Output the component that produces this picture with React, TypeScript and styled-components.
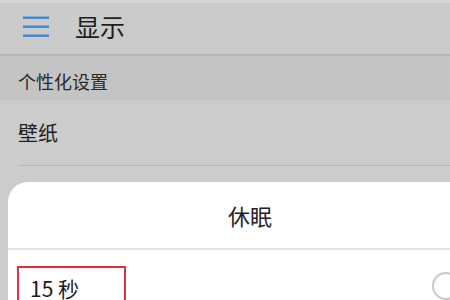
import React from "react";
import styled, { createGlobalStyle } from "styled-components";

const Global = createGlobalStyle`
  html, body { margin: 0; padding: 0; }
  body { width: 450px; height: 300px; overflow: hidden; background: #cccccc;
    font-family: "Noto Sans CJK SC", "Noto Sans", sans-serif; }
`;

const Screen = styled.div`
  width: 450px;
  height: 300px;
  overflow: hidden;
  background: #cccccc;
  display: flex;
  flex-direction: column;
`;

const Header = styled.header`
  flex: none;
  height: 56px;
  box-sizing: border-box;
  display: flex;
  align-items: center;
  padding: 0 0 5px 23px;
  gap: 26px;
  background: #cbcbcb;
  border-top: 3px solid #d5d5d5;
  border-bottom: 2px solid #b6b6b6;
`;

const Title = styled.h1`
  margin: 0;
  font-size: 25px;
  font-weight: 400;
  color: #1e1e1e;
  line-height: 1;
`;

const Section = styled.div`
  height: 44px;
  flex: none;
  box-sizing: border-box;
  display: flex;
  align-items: center;
  padding: 6px 0 0 18px;
  background: #c4c4c4;
  font-size: 18px;
  color: #2a2a2a;
`;

const Row = styled.div`
  height: 65px;
  flex: none;
  margin-left: 18px;
  display: flex;
  align-items: center;
  border-bottom: 1px solid #b8b8b8;
  font-size: 20px;
  color: #1e1e1e;
`;

const Dialog = styled.div`
  margin-top: 16px;
  margin-left: 8px;
  width: 484px;
  flex: 1;
  background: #ffffff;
  border-radius: 20px 20px 0 0;
  display: flex;
  flex-direction: column;
`;

const DialogTitle = styled.div`
  height: 66px;
  flex: none;
  display: flex;
  align-items: center;
  justify-content: center;
  font-size: 22px;
  color: #222;
  border-bottom: 2px solid #e3e3e3;
`;

const Option = styled.div`
  display: flex;
  align-items: flex-start;
  justify-content: space-between;
  padding: 16px 32px 0 9px;
`;

const Highlight = styled.div`
  width: 109px;
  height: 40px;
  border: 2px solid #d9343d;
  border-bottom: none;
  box-sizing: border-box;
  padding: 10px 0 0 11px;
  font-size: 21px;
  color: #1a1a1a;
  line-height: 1;
`;

const Radio = styled.div`
  width: 24px;
  height: 24px;
  border-radius: 50%;
  border: 2px solid #c9c9c9;
  margin-top: 6px;
`;

function Menu() {
  return (
    <svg width="26" height="21" viewBox="0 0 26 21">
      <rect x="0" y="0.5" width="26" height="2.4" fill="#3f87d6" />
      <rect x="0" y="9.5" width="26" height="2.4" fill="#3f87d6" />
      <rect x="0" y="18.5" width="26" height="2.4" fill="#3f87d6" />
    </svg>
  );
}

export default function App() {
  return (
    <Screen>
      <Global />
      <Header>
        <Menu />
        <Title>显示</Title>
      </Header>
      <Section>个性化设置</Section>
      <Row>壁纸</Row>
      <Dialog>
        <DialogTitle>休眠</DialogTitle>
        <Option>
          <Highlight>15 秒</Highlight>
          <Radio />
        </Option>
      </Dialog>
    </Screen>
  );
}
